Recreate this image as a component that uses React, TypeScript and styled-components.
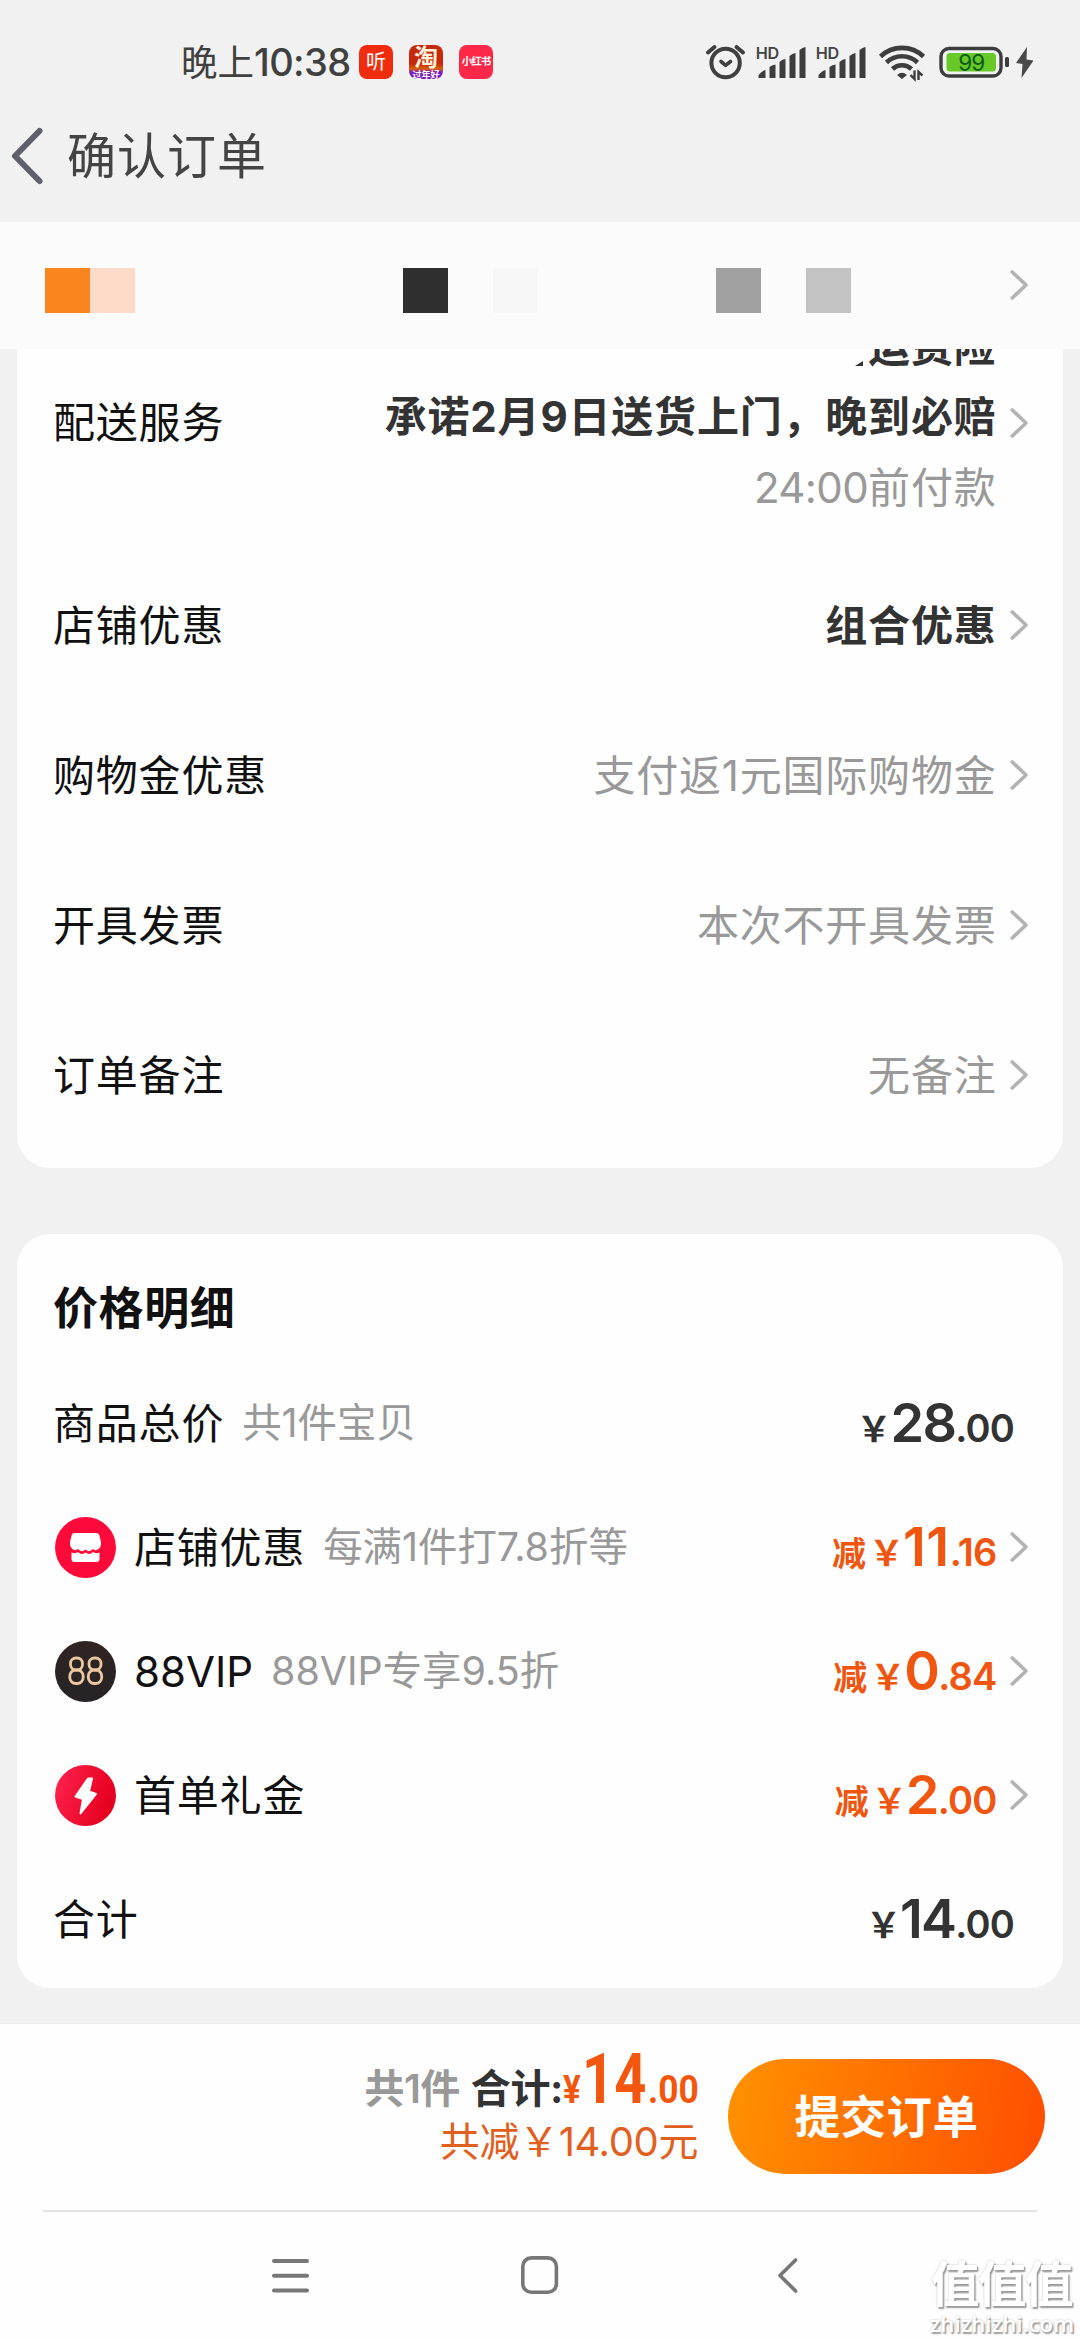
import React from "react";
import styled, { createGlobalStyle } from "styled-components";

const GlobalStyle = createGlobalStyle`
  * { box-sizing: border-box; }
  html, body { margin: 0; padding: 0; }
  body {
    width: 1080px;
    height: 2340px;
    overflow: hidden;
    background: #f1f1f1;
    font-family: Inter, "Noto Sans CJK SC", sans-serif;
  }
`;

const Screen = styled.div`
  position: relative;
  display: flex;
  flex-direction: column;
  width: 1080px;
  height: 2340px;
  overflow: hidden;
  background: #f1f1f1;
  color: #111;
`;

/* ---------- status bar ---------- */

const StatusBar = styled.div`
  display: flex;
  align-items: center;
  justify-content: space-between;
  height: 124px;
  padding: 0 46px 0 181px;
`;

const StatusGroup = styled.div`
  display: flex;
  align-items: center;
`;

const Clock = styled.span`
  width: 178px;
  font-size: 36.5px;
  line-height: 44px;
  color: #404040;
  white-space: nowrap;
`;

const ClockDigits = styled.span`
  font-size: 38px;
  font-weight: 500;
  letter-spacing: -0.6px;
`;

const AppBadge = styled.span<{ $bg: string; $size: number }>`
  display: flex;
  flex-direction: column;
  align-items: center;
  justify-content: center;
  width: 34px;
  height: 34px;
  margin-right: 16px;
  border-radius: 8px;
  background: ${(p) => p.$bg};
  color: #fff;
  font-size: ${(p) => p.$size}px;
  line-height: 1;
  white-space: nowrap;
`;

const BadgeMain = styled.span`
  font-size: 24px;
  line-height: 24px;
  font-weight: 700;
  color: #fff3dc;
`;

const BadgeSub = styled.span`
  font-size: 9px;
  line-height: 9px;
  font-weight: 700;
`;

const Tight = styled.span`
  font-weight: 700;
  letter-spacing: -1px;
`;

const StatusIcons = styled.svg`
  display: block;
  width: 330px;
  height: 40px;
`;

/* ---------- header ---------- */

const Header = styled.header`
  display: flex;
  align-items: center;
  height: 98px;
  padding: 0 0 34px 10px;
`;

const BackIcon = styled.svg`
  width: 34px;
  height: 60px;
`;

const Title = styled.h1`
  margin: 1px 0 0 23px;
  font-size: 49px;
  font-weight: 400;
  line-height: 60px;
  letter-spacing: 1px;
  color: #444;
`;

/* ---------- address strip ---------- */

const AddressStrip = styled.div`
  display: flex;
  align-items: center;
  justify-content: space-between;
  height: 127px;
  padding: 10px 51px 0 45px;
  background: #fbfbfb;
`;

const Mosaic = styled.div`
  display: grid;
  grid-template-columns: repeat(18, 44.75px);
`;

const Tile = styled.span<{ $col: number; $color: string }>`
  grid-column: ${(p) => p.$col};
  grid-row: 1;
  height: 45px;
  background: ${(p) => p.$color};
`;

const StripArrow = styled.span`
  display: flex;
  padding-bottom: 12px;
`;

/* ---------- scrolling content ---------- */

const Scroll = styled.main`
  height: 1674px;
  overflow: hidden;
  padding: 0 17px;
`;

const Card = styled.section<{ $offset: number; $height: number; $pad: string }>`
  height: ${(p) => p.$height}px;
  margin-top: ${(p) => p.$offset}px;
  padding: ${(p) => p.$pad};
  border-radius: 33px;
  background: #fefefe;
`;

const Row = styled.div<{ $height: number }>`
  display: flex;
  align-items: center;
  height: ${(p) => p.$height}px;
`;

const DeliveryRow = styled(Row)`
  align-items: flex-start;
`;

const TallCell = styled.div`
  display: flex;
  align-items: center;
  height: 223px;
`;

const Label = styled.span<{ $track?: number }>`
  padding-top: 1px;
  font-size: 42px;
  line-height: 60px;
  letter-spacing: ${(p) => p.$track ?? 0.8}px;
  color: #111;
  white-space: nowrap;
`;

const Value = styled.span<{ $strong?: boolean }>`
  margin-left: auto;
  padding-top: 1px;
  font-size: 42px;
  line-height: 60px;
  letter-spacing: 0.8px;
  font-weight: ${(p) => (p.$strong ? 700 : 400)};
  color: ${(p) => (p.$strong ? "#333" : "#999")};
  white-space: nowrap;
`;

const TimeDigits = styled.span`
  letter-spacing: -0.6px;
`;

const ValueStack = styled.div`
  display: flex;
  flex-direction: column;
  align-items: flex-end;
  margin-left: auto;
`;

const StackLine = styled.div`
  display: flex;
  align-items: center;
  height: 70.5px;
`;

const Fragment = styled.svg`
  width: 8px;
  height: 5px;
  margin: 34px 5px 0 0;
`;

const ArrowSvg = styled.svg`
  flex: none;
  width: 20px;
  height: 32px;
  margin-left: 12.5px;
`;

const CardTitle = styled.h2`
  margin: 0 0 12px;
  font-size: 45px;
  font-weight: 700;
  line-height: 80px;
  letter-spacing: 0.6px;
  color: #111;
`;

const Desc = styled.span`
  margin-left: 18px;
  font-size: 39.4px;
  line-height: 60px;
  color: #999;
  white-space: nowrap;
`;

const RoundIcon = styled.svg`
  flex: none;
  width: 61px;
  height: 61px;
  margin: 0 18px 0 2px;
`;

const PriceText = styled.span<{ $accent?: boolean }>`
  margin-left: auto;
  margin-right: ${(p) => (p.$accent ? 0 : 15)}px;
  padding-top: 6px;
  line-height: 60px;
  font-size: 54px;
  font-weight: 600;
  letter-spacing: -1.8px;
  color: ${(p) => (p.$accent ? "#f0560f" : "#333")};
  white-space: nowrap;
`;

const PricePart = styled.span<{ $size: number; $heavy?: boolean; $gap?: number }>`
  margin-right: ${(p) => p.$gap ?? 0}px;
  font-size: ${(p) => p.$size}px;
  font-weight: ${(p) => (p.$heavy ? 700 : 600)};
  letter-spacing: ${(p) => (p.$heavy ? 0 : -0.8)}px;
`;

const WholePart = styled.span<{ $track?: number }>`
  letter-spacing: ${(p) => p.$track ?? -1.8}px;
`;

/* ---------- submit bar ---------- */

const SubmitBar = styled.footer`
  display: flex;
  align-items: flex-start;
  justify-content: flex-end;
  height: 187px;
  padding: 0 35px;
  background: #fefefe;
  border-top: 1px solid #ececec;
`;

const Totals = styled.div`
  display: flex;
  flex-direction: column;
  align-items: flex-end;
  padding: 18px 30px 0 0;
`;

const TotalLine = styled.div`
  display: flex;
  align-items: baseline;
  height: 75px;
  line-height: 74px;
  font-size: 40px;
  font-weight: 700;
  white-space: nowrap;
`;

const CountText = styled.span`
  margin-right: 11px;
  color: #999;
  font-weight: 600;
  letter-spacing: -0.5px;
`;

const TotalText = styled.span`
  color: #333;
  letter-spacing: -0.4px;
`;

const TotalNumber = styled.span<{ $size: number; $width: number; $scale: number }>`
  width: ${(p) => p.$width}px;
  transform: scaleX(${(p) => p.$scale});
  transform-origin: left;
  font-family: Roboto, Inter, sans-serif;
  font-size: ${(p) => p.$size}px;
  color: #f3560f;
`;

const SavedLine = styled.div`
  font-size: 40px;
  line-height: 50px;
  letter-spacing: -0.4px;
  color: #e2601f;
  white-space: nowrap;
`;

const SubmitButton = styled.button`
  width: 317px;
  height: 115px;
  margin-top: 35px;
  padding: 0 0 6px;
  border: 0;
  border-radius: 58px;
  background: linear-gradient(100deg, #ff9200 0%, #ff7000 50%, #ff4e00 100%);
  color: #fff;
  font-family: inherit;
  font-size: 45.5px;
  font-weight: 700;
  letter-spacing: 0.5px;
`;

/* ---------- system navigation ---------- */

const Divider = styled.div`
  height: 2px;
  background: linear-gradient(#e4e4e4, #e4e4e4) 43px 0 / 994px 2px no-repeat #fefefe;
`;

const NavBar = styled.nav`
  display: flex;
  flex: 1;
  align-items: flex-start;
  justify-content: space-between;
  padding: 44px 280px 0 270px;
  background: #fefefe;
`;

const NavIcon = styled.svg<{ $shift?: number }>`
  width: 42px;
  height: 42px;
  margin-left: ${(p) => p.$shift ?? 0}px;
`;

const Watermark = styled.div`
  position: absolute;
  right: 6px;
  bottom: 4px;
  display: flex;
  flex-direction: column;
  align-items: center;
  width: 146px;
  color: #fff;
  text-shadow: 1.5px 1.5px 1.5px #999, 0 0 2px #bbb;
`;

const WatermarkMain = styled.span`
  font-size: 49px;
  line-height: 52px;
  font-weight: 700;
  letter-spacing: -2px;
`;

const WatermarkSite = styled.span`
  padding-left: 2px;
  font-family: "Open Sans", sans-serif;
  font-size: 22.2px;
  line-height: 25px;
  font-weight: 600;
`;

function Arrow() {
  return (
    <ArrowSvg viewBox="0 0 20 32" fill="none">
      <path d="M3.2 3 L17 16 L3.2 29" stroke="#b3b3b3" strokeWidth="3.6" strokeLinecap="round" strokeLinejoin="round" />
    </ArrowSvg>
  );
}

function SignalBars({ x }: { x: number }) {
  return (
    <g transform={`translate(${x} 0)`}>
      <text x="-0.8" y="16.5" fontSize="16.2" fontWeight="600" letterSpacing="-0.2" fontFamily="Inter, sans-serif" fill="#444">
        HD
      </text>
      <g fill="#3d3d3d">
        <path d="M2 36 V33 Q6 28.5 9 28 V36 Z" />
        <path d="M13 36 V25 Q16 22.5 19 22.5 V36 Z" />
        <path d="M23 36 V20 Q26 17 29 17 V36 Z" />
        <path d="M33 36 V14 Q36 11.5 39 11 V36 Z" />
        <path d="M43 36 V8 Q46 5.5 49 5 V36 Z" />
      </g>
    </g>
  );
}

/* Alarm, two signal meters, wifi, battery and charging bolt. */
function StatusGlyphs() {
  return (
    <StatusIcons viewBox="0 0 330 40" fill="none">
      <g stroke="#404040" strokeWidth="4" strokeLinecap="round" strokeLinejoin="round">
        <circle cx="21.6" cy="21" r="14.2" />
        <path d="M4 10.5 L10.5 5 M39 10.5 L32.5 5" />
        <path d="M17 19.5 L21.6 23.3 L26.5 19.5" strokeWidth="3.6" />
      </g>
      <SignalBars x={52.5} />
      <SignalBars x={112.5} />
      <g stroke="#3d3d3d" strokeWidth="4.6">
        <path d="M176.5 14.5 A 31 31 0 0 1 219.5 14.5" />
        <path d="M182.5 20.5 A 22.5 22.5 0 0 1 213.5 20.5" />
        <path d="M188.5 27 A 14 14 0 0 1 207.5 27" />
      </g>
      <path d="M193 33 Q198 28.5 203 33 L198 37 Z" fill="#3d3d3d" />
      <path d="M210.5 28.5 V37 L206.5 33 M214.5 38 V30 L218.5 33.5" stroke="#3d3d3d" strokeWidth="2.4" />
      <rect x="237" y="6.5" width="60" height="27.5" rx="8" stroke="#3d3d3d" strokeWidth="3.4" />
      <rect x="242.5" y="11" width="49.5" height="18.5" rx="3.5" fill="#66c928" />
      <text x="267.2" y="28.6" textAnchor="middle" fontSize="22.5" letterSpacing="-1" fontFamily="Inter, sans-serif" fill="#0c5a10">
        99
      </text>
      <rect x="301" y="15" width="4" height="10" rx="1.5" fill="#3d3d3d" />
      <path d="M323 5 L312 21 L318.5 22 L317.5 36 L329.5 18.5 L322.5 17.5 Z" fill="#4a4a4a" />
    </StatusIcons>
  );
}

function ShopIcon() {
  return (
    <RoundIcon viewBox="0 0 61 61">
      <circle cx="30.5" cy="30.5" r="30.5" fill="#fd0a3a" />
      <path
        d="M19.5 16 H41.5 Q43.5 16 44.3 18 L46 25 Q46.5 31.5 41.5 33 Q39.5 33.5 38 32 Q34.5 36 30.5 32.5 Q26.5 36 23 32 Q21.5 33.5 19.5 33 Q14.5 31.5 15 25 L16.7 18 Q17.5 16 19.5 16 Z"
        fill="#fff"
      />
      <path d="M16.5 35.5 Q20.5 37 23 35 Q26.5 38.5 30.5 35.5 Q34.5 38.5 38 35 Q40.5 37 44.5 35.5 V42 Q44.5 45 41.5 45 H19.5 Q16.5 45 16.5 42 Z" fill="#fff" />
    </RoundIcon>
  );
}

function VipIcon() {
  return (
    <RoundIcon viewBox="0 0 61 61">
      <defs>
        <linearGradient id="vipBg" x1="0" y1="0" x2="0" y2="1">
          <stop offset="0" stopColor="#302422" />
          <stop offset="1" stopColor="#262326" />
        </linearGradient>
      </defs>
      <circle cx="30.5" cy="30.5" r="30.5" fill="url(#vipBg)" />
      <g fill="none" stroke="#eac8a2" strokeWidth="2.8">
        <rect x="15.5" y="17" width="12" height="12" rx="5.5" />
        <rect x="14.8" y="29" width="13.4" height="13.5" rx="6" />
        <rect x="34" y="17" width="12" height="12" rx="5.5" />
        <rect x="33.3" y="29" width="13.4" height="13.5" rx="6" />
      </g>
    </RoundIcon>
  );
}

function BoltIcon() {
  return (
    <RoundIcon viewBox="0 0 61 61">
      <defs>
        <linearGradient id="boltBg" x1="0" y1="0" x2="1" y2="0.3">
          <stop offset="0" stopColor="#ff2450" />
          <stop offset="1" stopColor="#e6001f" />
        </linearGradient>
      </defs>
      <circle cx="30.5" cy="30.5" r="30.5" fill="url(#boltBg)" />
      <path
        d="M33 13.5 L20.5 31.5 L28 34 L25.5 48.5 L41 29 L34 26.5 L37 13.5 Z"
        fill="#fff"
        stroke="#fff"
        strokeWidth="2"
        strokeLinejoin="round"
      />
    </RoundIcon>
  );
}

function Price({ whole, cents, minus, track }: { whole: string; cents: string; minus?: boolean; track?: number }) {
  return (
    <PriceText $accent={minus}>
      {minus && (
        <PricePart $size={34} $gap={3} $heavy>
          减
        </PricePart>
      )}
      <PricePart $size={35} $gap={-1} $heavy>
        ￥
      </PricePart>
      <WholePart $track={track}>{whole}</WholePart>
      <PricePart $size={38}>.{cents}</PricePart>
    </PriceText>
  );
}

const options = [
  { label: "店铺优惠", value: "组合优惠", strong: true },
  { label: "购物金优惠", value: "支付返1元国际购物金" },
  { label: "开具发票", value: "本次不开具发票" },
  { label: "订单备注", value: "无备注" },
];

const discounts = [
  { Icon: ShopIcon, label: "店铺优惠", desc: "每满1件打7.8折等", whole: "11", cents: "16", digitTrack: 0.6 },
  { Icon: VipIcon, label: "88VIP", desc: "88VIP专享9.5折", whole: "0", cents: "84", track: 0 },
  { Icon: BoltIcon, label: "首单礼金", desc: "", whole: "2", cents: "00" },
];

const tiles = [
  { col: 1, color: "#fa841e" },
  { col: 2, color: "#fedac8" },
  { col: 9, color: "#2f2f2f" },
  { col: 11, color: "#f7f7f7" },
  { col: 16, color: "#a1a1a1" },
  { col: 18, color: "#c3c3c3" },
];

export default function App() {
  return (
    <Screen>
      <GlobalStyle />
      <StatusBar>
        <StatusGroup>
          <Clock>
            晚上<ClockDigits>10:38</ClockDigits>
          </Clock>
          <AppBadge $bg="#f02c0c" $size={20}>
            听
          </AppBadge>
          <AppBadge $bg="linear-gradient(#c8280c 0 55%, #d8600c 70%, #7a1ec0 80%)" $size={10}>
            <BadgeMain>淘</BadgeMain>
            <BadgeSub>过年好</BadgeSub>
          </AppBadge>
          <AppBadge $bg="#fd2848" $size={10.5}>
            <Tight>小红书</Tight>
          </AppBadge>
        </StatusGroup>
        <StatusGlyphs />
      </StatusBar>

      <Header>
        <BackIcon viewBox="0 0 34 60" fill="none">
          <path d="M29.5 5 L5 30 L29.5 55" stroke="#5f606d" strokeWidth="6" strokeLinecap="round" strokeLinejoin="round" />
        </BackIcon>
        <Title>确认订单</Title>
      </Header>

      <AddressStrip>
        <Mosaic>
          {tiles.map((t) => (
            <Tile key={t.col} $col={t.col} $color={t.color} />
          ))}
        </Mosaic>
        <StripArrow>
          <Arrow />
        </StripArrow>
      </AddressStrip>

      <Scroll>
        <Card $offset={-54} $height={873} $pad="16px 34px 0 36px">
          <DeliveryRow $height={239}>
            <TallCell>
              <Label>配送服务</Label>
            </TallCell>
            <ValueStack>
              <StackLine>
                <Fragment viewBox="0 0 8 5">
                  <path d="M0 5 L8 0 V5 Z" fill="#333" />
                </Fragment>
                <Value $strong>运费险</Value>
              </StackLine>
              <StackLine>
                <Value $strong>承诺2月9日送货上门，晚到必赔</Value>
              </StackLine>
              <StackLine>
                <Value>
                  <TimeDigits>24:00</TimeDigits>前付款
                </Value>
              </StackLine>
            </ValueStack>
            <TallCell>
              <Arrow />
            </TallCell>
          </DeliveryRow>
          {options.map((o) => (
            <Row key={o.label} $height={150}>
              <Label>{o.label}</Label>
              <Value $strong={o.strong}>{o.value}</Value>
              <Arrow />
            </Row>
          ))}
        </Card>

        <Card $offset={66} $height={754} $pad="35px 34px 0 36px">
          <CardTitle>价格明细</CardTitle>
          <Row $height={124}>
            <Label>商品总价</Label>
            <Desc>共1件宝贝</Desc>
            <Price whole="28" cents="00" />
          </Row>
          {discounts.map(({ Icon, ...d }) => (
            <Row key={d.label} $height={124}>
              <Icon />
              <Label $track={d.track}>{d.label}</Label>
              {d.desc && <Desc>{d.desc}</Desc>}
              <Price whole={d.whole} cents={d.cents} track={d.digitTrack} minus />
              <Arrow />
            </Row>
          ))}
          <Row $height={124}>
            <Label>合计</Label>
            <Price whole="14" cents="00" />
          </Row>
        </Card>
      </Scroll>

      <SubmitBar>
        <Totals>
          <TotalLine>
            <CountText>共1件</CountText>
            <TotalText>合计:</TotalText>
            <TotalNumber $size={39} $width={19} $scale={0.85}>
              ¥
            </TotalNumber>
            <TotalNumber $size={70} $width={66} $scale={0.8}>
              14
            </TotalNumber>
            <TotalNumber $size={38} $width={50} $scale={0.93}>
              .00
            </TotalNumber>
          </TotalLine>
          <SavedLine>共减￥14.00元</SavedLine>
        </Totals>
        <SubmitButton>提交订单</SubmitButton>
      </SubmitBar>

      <Divider />
      <NavBar>
        <NavIcon viewBox="0 0 42 42" fill="none" stroke="#777" strokeWidth="4" strokeLinecap="round">
          <path d="M4 5 H37 M4 19.8 H37 M4 34.5 H37" />
        </NavIcon>
        <NavIcon $shift={12} viewBox="0 0 42 42" fill="none" stroke="#777" strokeWidth="3.6">
          <rect x="2.8" y="1.9" width="33.6" height="34.4" rx="8.5" />
        </NavIcon>
        <NavIcon viewBox="0 0 42 42" fill="none" stroke="#777" strokeWidth="3.6" strokeLinecap="round" strokeLinejoin="round">
          <path d="M37.6 4 L22 19.5 L37.6 35" />
        </NavIcon>
      </NavBar>

      <Watermark>
        <WatermarkMain>值值值</WatermarkMain>
        <WatermarkSite>zhizhizhi.com</WatermarkSite>
      </Watermark>
    </Screen>
  );
}
